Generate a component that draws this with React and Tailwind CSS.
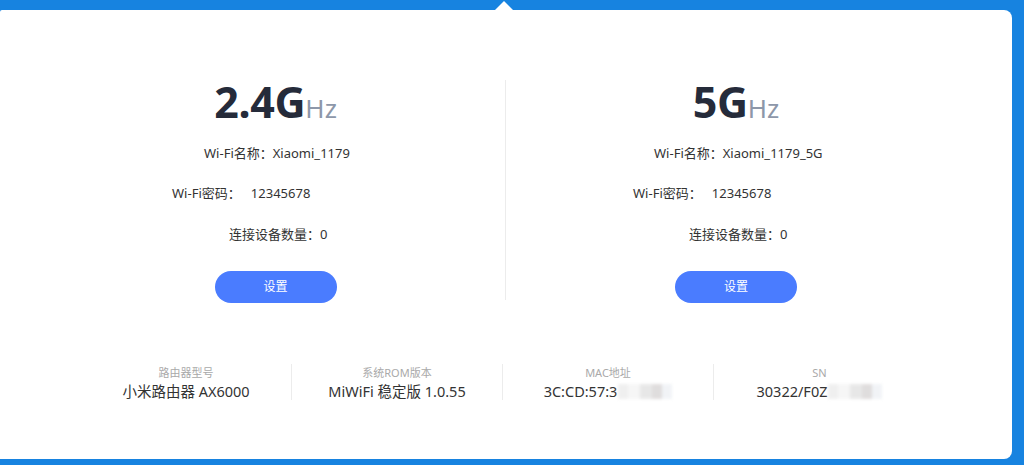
import React from 'react';

const font = { fontFamily: '"Noto Sans", "Noto Sans CJK SC", sans-serif' };

const Band = ({ big, rows, last }) => {
  return (
    <div className={`w-1/2 h-[220px] flex flex-col ${last ? '' : 'border-r border-[#ececec]'}`}>
      <div className="flex justify-center items-baseline leading-none text-[#252b3a]">
        <span className="text-[43px] font-bold tracking-[-0.3px]">{big}</span>
        <span className="text-[26px] text-[#8d97a9]">Hz</span>
      </div>
      <div className="mt-[21px] text-[13px] text-[#333] leading-[18px]">
        {rows.map((r, i) => (
          <div key={i} className={`${r.pl} ${i ? (i === 2 ? 'mt-[23px]' : 'mt-[22px]') : ''} whitespace-pre`}>
            {r.text}
          </div>
        ))}
      </div>
      <div className="flex justify-center mt-[28px]">
        <button className="w-[122px] h-[32px] rounded-full bg-[#4a7cff] text-white text-[12px]">设置</button>
      </div>
    </div>
  );
};

const Info = ({ label, value, blur, last }) => {
  return (
    <div className={`flex flex-col items-center h-[36px] ${last ? '' : 'border-r border-[#ececec]'}`}>
      <div className="text-[11px] text-[#a9a9a9] leading-[14px] mt-[2px]">{label}</div>
      <div className="text-[14.5px] text-[#333] leading-[20px] mt-[1px] flex items-center">
        {value}
        {blur && (
          <span className="inline-flex h-[15px] ml-[1px] blur-[1.5px] opacity-80">
            <span className="w-[10px] bg-[#ececec]" />
            <span className="w-[12px] bg-[#f4f4f4]" />
            <span className="w-[12px] bg-[#e2e2e2]" />
            <span className="w-[10px] bg-[#d8d5d5]" />
            <span className="w-[10px] bg-[#eef1f5]" />
          </span>
        )}
      </div>
    </div>
  );
};

export default function App() {
  return (
    <div className="w-[1024px] h-[465px] bg-[#1783e0] pt-[10px] pr-[12px] overflow-hidden" style={font}>
      <div className="relative h-[449px] bg-white rounded-r-[8px] rounded-tl-[2px]">
        <svg className="absolute left-[494px] -top-[9px]" width="20" height="10" viewBox="0 0 20 10">
          <path d="M0 10 L10 0 L20 10 Z" fill="#fff" />
        </svg>
        <div className="flex px-[46px] pt-[70px]">
          <Band
            big="2.4G"
            rows={[
              { text: 'Wi-Fi名称：Xiaomi_1179', pl: 'pl-[158px]' },
              { text: 'Wi-Fi密码：   12345678', pl: 'pl-[126px]' },
              { text: '连接设备数量：0', pl: 'pl-[183px]' },
            ]}
          />
          <Band
            big="5G"
            last
            rows={[
              { text: 'Wi-Fi名称：Xiaomi_1179_5G', pl: 'pl-[148px]' },
              { text: 'Wi-Fi密码：   12345678', pl: 'pl-[127px]' },
              { text: '连接设备数量：0', pl: 'pl-[183px]' },
            ]}
          />
        </div>
        <div className="ml-[81px] w-[844px] grid grid-cols-4 mt-[64px]">
          <Info label="路由器型号" value="小米路由器 AX6000" />
          <Info label="系统ROM版本" value="MiWiFi 稳定版 1.0.55" />
          <Info label="MAC地址" value="3C:CD:57:3" blur />
          <Info label="SN" value="30322/F0Z" blur last />
        </div>
      </div>
    </div>
  );
}
